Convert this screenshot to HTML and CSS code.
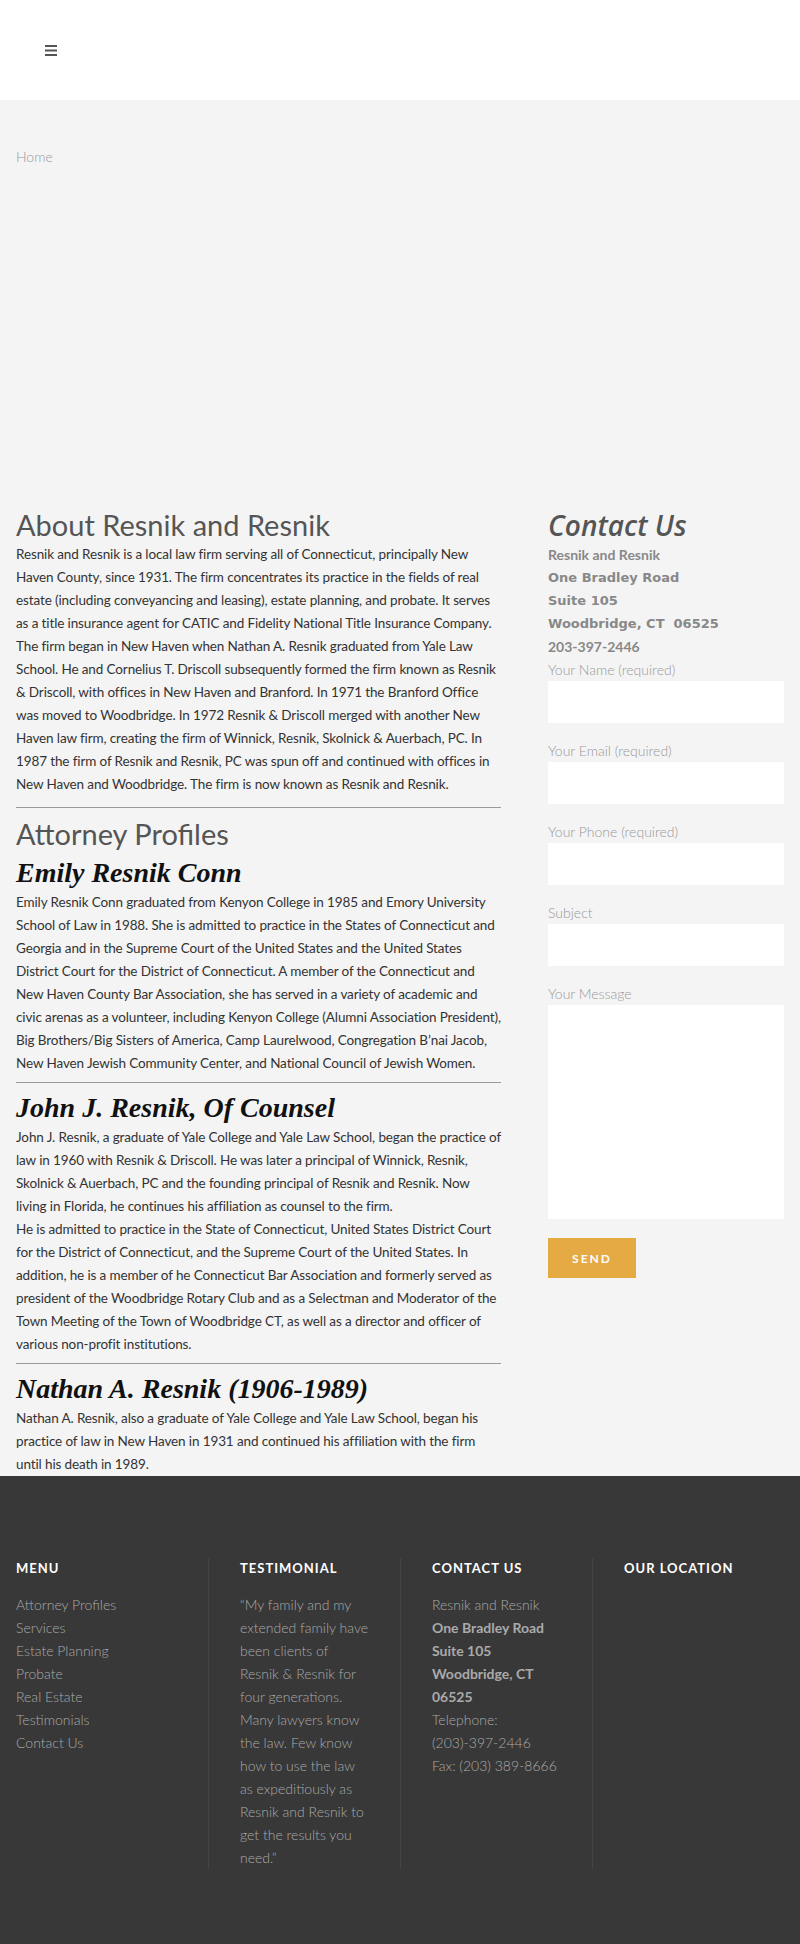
FILE: index.html
```html
<!DOCTYPE html>
<html lang="en">
<head>
<meta charset="utf-8">
<title>Attorney Profiles | Resnik and Resnik</title>
<link rel="stylesheet" href="styles.css">
</head>
<body>
<header class="topbar">
  <button class="menu-toggle" aria-label="Menu">
    <svg width="12" height="11" viewBox="0 0 12 11"><rect x="0" y="0" width="12" height="2" fill="#555"/><rect x="0" y="4.5" width="12" height="2" fill="#555"/><rect x="0" y="9" width="12" height="2" fill="#555"/></svg>
  </button>
</header>

<div class="breadcrumbs">Home</div>

<main class="content">
  <div class="main-col">
    <section class="about">
      <h1 class="section-title">About Resnik and Resnik</h1>
      <p>Resnik and Resnik is a local law firm serving all of Connecticut, principally New Haven County, since 1931. The firm concentrates its practice in the fields of real estate (including conveyancing and leasing), estate planning, and probate. It serves as a title insurance agent for CATIC and Fidelity National Title Insurance Company. The firm began in New Haven when Nathan A. Resnik graduated from Yale Law School. He and Cornelius T. Driscoll subsequently formed the firm known as Resnik &amp; Driscoll, with offices in New Haven and Branford. In 1971 the Branford Office was moved to Woodbridge. In 1972 Resnik &amp; Driscoll merged with another New Haven law firm, creating the firm of Winnick, Resnik, Skolnick &amp; Auerbach, PC. In 1987 the firm of Resnik and Resnik, PC was spun off and continued with offices in New Haven and Woodbridge. The firm is now known as Resnik and Resnik.</p>
    </section>
    <hr class="rule">
    <section class="profiles">
      <h2 class="section-title profiles-title">Attorney Profiles</h2>
      <article class="profile">
        <h3 class="profile-name">Emily Resnik Conn</h3>
        <p>Emily Resnik Conn graduated from Kenyon College in 1985 and Emory University School of Law in 1988. She is admitted to practice in the States of Connecticut and Georgia and in the Supreme Court of the United States and the United States District Court for the District of Connecticut. A member of the Connecticut and New Haven County Bar Association, she has served in a variety of academic and civic arenas as a volunteer, including Kenyon College (Alumni Association President), Big Brothers/Big Sisters of America, Camp Laurelwood, Congregation B’nai Jacob, New Haven Jewish Community Center, and National Council of Jewish Women.</p>
      </article>
      <hr class="rule">
      <article class="profile">
        <h3 class="profile-name">John J. Resnik, Of Counsel</h3>
        <p>John J. Resnik, a graduate of Yale College and Yale Law School, began the practice of law in 1960 with Resnik &amp; Driscoll. He was later a principal of Winnick, Resnik, Skolnick &amp; Auerbach, PC and the founding principal of Resnik and Resnik. Now living in Florida, he continues his affiliation as counsel to the firm.</p>
        <p>He is admitted to practice in the State of Connecticut, United States District Court for the District of Connecticut, and the Supreme Court of the United States. In addition, he is a member of he Connecticut Bar Association and formerly served as president of the Woodbridge Rotary Club and as a Selectman and Moderator of the Town Meeting of the Town of Woodbridge CT, as well as a director and officer of various non-profit institutions.</p>
      </article>
      <hr class="rule">
      <article class="profile">
        <h3 class="profile-name">Nathan A. Resnik (1906-1989)</h3>
        <p>Nathan A. Resnik, also a graduate of Yale College and Yale Law School, began his practice of law in New Haven in 1931 and continued his affiliation with the firm until his death in 1989.</p>
      </article>
    </section>
  </div>

  <aside class="contact-col">
    <h2 class="contact-title">Contact Us</h2>
    <div class="contact-info">
      <div class="firm">Resnik and Resnik</div>
      <div class="addr">One Bradley Road</div>
      <div class="addr">Suite 105</div>
      <div class="addr">Woodbridge, CT&nbsp; 06525</div>
      <div class="firm">203-397-2446</div>
    </div>
    <form class="contact-form">
      <label class="field"><span>Your Name (required)</span><input type="text"></label>
      <label class="field"><span>Your Email (required)</span><input type="email"></label>
      <label class="field"><span>Your Phone (required)</span><input type="tel"></label>
      <label class="field"><span>Subject</span><input type="text"></label>
      <label class="field"><span>Your Message</span><textarea></textarea></label>
      <button type="button" class="send-btn">Send</button>
    </form>
  </aside>
</main>

<footer class="site-footer">
  <div class="footer-col">
    <h4>Menu</h4>
    <ul class="footer-menu">
      <li>Attorney Profiles</li>
      <li>Services</li>
      <li>Estate Planning</li>
      <li>Probate</li>
      <li>Real Estate</li>
      <li>Testimonials</li>
      <li>Contact Us</li>
    </ul>
  </div>
  <div class="footer-col">
    <h4>Testimonial</h4>
    <p>“My family and my extended family have been clients of Resnik &amp; Resnik for four generations. Many lawyers know the law. Few know how to use the law as expeditiously as Resnik and Resnik to get the results you need.”</p>
  </div>
  <div class="footer-col">
    <h4>Contact Us</h4>
    <p>Resnik and Resnik<br><strong>One Bradley Road<br>Suite 105<br>Woodbridge, CT 06525</strong><br>Telephone: (203)-397-2446<br>Fax: (203) 389-8666</p>
  </div>
  <div class="footer-col">
    <h4>Our Location</h4>
  </div>
</footer>
</body>
</html>
```

FILE: styles.css
```css
* { box-sizing: border-box; }

body {
  margin: 0;
  background: #f4f4f4;
  color: #333;
  font-family: Lato, "Open Sans", sans-serif;
  font-size: 14px;
  line-height: 23px;
}

/* top bar */
.topbar {
  height: 100px;
  background: #fff;
  display: flex;
  align-items: center;
  padding-left: 45px;
}
.menu-toggle {
  border: 0;
  background: none;
  padding: 0;
  display: flex;
  cursor: pointer;
}

.breadcrumbs {
  padding: 45px 16px 339px;
  font-size: 14px;
  color: #999;
  font-weight: 300;
}

/* two-column body */
.content {
  display: grid;
  grid-template-columns: 485px 1fr;
  column-gap: 47px;
  padding: 0 16px;
}

.section-title {
  margin: 0;
  font-family: Lato, sans-serif;
  font-weight: 400;
  font-size: 29px;
  line-height: 36px;
  color: #555;
}
.profiles-title {
  line-height: 40px;
}

.main-col p {
  margin: 0;
  font-size: 13.5px;
  letter-spacing: -0.12px;
}
.about {
  padding-bottom: 4px;
}

.rule {
  border: 0;
  border-top: 1px solid #999;
  margin: 7px 0 6px;
}

.profile-name {
  margin: 0;
  font-family: "Liberation Serif", serif;
  font-style: italic;
  font-weight: 700;
  font-size: 28px;
  line-height: 37px;
  color: #111;
}

/* sidebar */
.contact-title {
  margin: 0;
  font-family: "Open Sans", sans-serif;
  font-style: italic;
  font-weight: 600;
  font-size: 28px;
  line-height: 36px;
  color: #555;
}
.contact-info {
  color: #888;
  font-weight: 700;
}
.contact-info .firm {
  font-size: 14px;
}
.contact-info .addr {
  font-family: "DejaVu Sans", sans-serif;
  font-size: 13px;
}

.contact-form {
  display: flex;
  flex-direction: column;
}
.field {
  display: flex;
  flex-direction: column;
  margin-bottom: 16px;
}
.field span {
  font-size: 14px;
  line-height: 23px;
  font-weight: 300;
  color: #999;
}
.field input,
.field textarea {
  border: 0;
  background: #fff;
  height: 42px;
  font: inherit;
  padding: 0 10px;
}
.field textarea {
  height: 214px;
  resize: none;
}
.send-btn {
  align-self: flex-start;
  margin-top: 3px;
  width: 88px;
  height: 40px;
  border: 0;
  background: #e5aa43;
  color: #fff;
  font-family: Lato, sans-serif;
  font-weight: 700;
  font-size: 12px;
  letter-spacing: 2px;
  text-transform: uppercase;
}

/* footer */
.site-footer {
  background: #383838;
  color: #aaa;
  font-size: 14px;
  padding: 82px 16px 75px;
  display: grid;
  grid-template-columns: repeat(4, 1fr);
}
.footer-col {
  padding: 0 30px 0 31px;
  border-left: 1px solid #444;
}
.footer-col:first-child {
  padding-left: 0;
  border-left: 0;
}
.footer-col h4 {
  margin: 0 0 15px;
  color: #fff;
  font-size: 13px;
  line-height: 20px;
  font-weight: 700;
  letter-spacing: 1px;
  text-transform: uppercase;
}
.footer-col p {
  margin: 0;
  font-weight: 300;
}
.footer-col strong {
  font-weight: 700;
}
.footer-menu {
  list-style: none;
  margin: 0;
  padding: 0;
  font-weight: 300;
}
```
